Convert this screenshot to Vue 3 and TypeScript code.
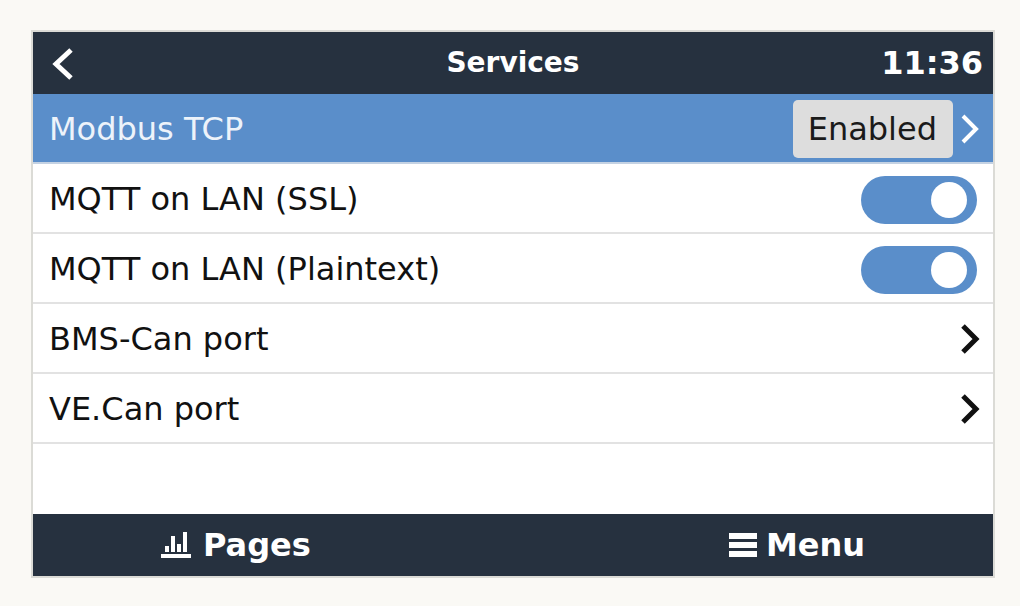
<script setup lang="ts">
import { ref } from 'vue'

interface Setting {
  id: string
  label: string
  kind: 'value' | 'switch' | 'link'
  value?: string
  on?: boolean
}

const selected = ref('modbus')
const settings = ref<Setting[]>([
  { id: 'modbus', label: 'Modbus TCP', kind: 'value', value: 'Enabled' },
  { id: 'mqtt-ssl', label: 'MQTT on LAN (SSL)', kind: 'switch', on: true },
  { id: 'mqtt-plain', label: 'MQTT on LAN (Plaintext)', kind: 'switch', on: true },
  { id: 'bms-can', label: 'BMS-Can port', kind: 'link' },
  { id: 've-can', label: 'VE.Can port', kind: 'link' },
])
</script>

<template>
  <div class="page">
    <main class="device">
      <header class="bar top">
        <button class="back" type="button" aria-label="Back">
          <svg width="24" height="34" viewBox="0 0 24 34" aria-hidden="true">
            <path d="M19 3 4 17l15 14" fill="none" stroke="currentColor" stroke-width="5" />
          </svg>
        </button>
        <h1>Services</h1>
        <time>11:36</time>
      </header>

      <ul class="list">
        <li v-for="s in settings" :key="s.id">
          <label v-if="s.kind === 'switch'" class="row" :class="{ active: selected === s.id }">
            <span class="name">{{ s.label }}</span>
            <input v-model="s.on" class="switch" type="checkbox" role="switch" />
          </label>
          <button
            v-else
            class="row"
            :class="{ active: selected === s.id }"
            type="button"
            @click="selected = s.id"
          >
            <span class="name">{{ s.label }}</span>
            <span v-if="s.value" class="value">{{ s.value }}</span>
            <svg class="chevron" width="20" height="30" viewBox="0 0 20 30" aria-hidden="true">
              <path d="M3 2 16 15 3 28" fill="none" stroke="currentColor" />
            </svg>
          </button>
        </li>
      </ul>

      <footer class="bar bottom">
        <button class="action pages" type="button">
          <svg width="30" height="28" viewBox="0 0 30 28" aria-hidden="true">
            <path
              d="M0 23h30v4H0zM4 15h4v6H4zM10 5h4v16h-4zM16 13h4v8h-4zM22 1h4v20h-4z"
              fill="currentColor"
            />
          </svg>
          <span>Pages</span>
        </button>
        <button class="action menu" type="button">
          <svg width="28" height="28" viewBox="0 0 28 28" aria-hidden="true">
            <path d="M0 2h28v6H0zM0 11h28v6H0zM0 20h28v6H0z" fill="currentColor" />
          </svg>
          <span>Menu</span>
        </button>
      </footer>
    </main>
  </div>
</template>

<style>
body {
  background: #faf9f5;
}
</style>

<style scoped>
.page {
  box-sizing: border-box;
  min-height: 100vh;
  padding: 30px 25px 28px 31px;
  display: flex;
  background: #faf9f5;
  font-family: 'DejaVu Sans', sans-serif;
  font-size: 32px;
  line-height: 40px;
  color: #111;
}

.device {
  flex: 1;
  display: flex;
  flex-direction: column;
  border: 2px solid #dbdbd6;
  background: #fff;
}

button {
  margin: 0;
  padding: 0;
  border: 0;
  background: none;
  color: inherit;
  font: inherit;
  cursor: pointer;
}

svg {
  display: block;
  flex: none;
}

.bar {
  min-height: 62px;
  background: #26313f;
  color: #fff;
  font-weight: bold;
}

.top {
  display: grid;
  grid-template-columns: 1fr auto 1fr;
  align-items: center;
  padding: 0 10px;
}

.back {
  justify-self: start;
  padding: 2px 0 0 9px;
}

h1 {
  margin: 0;
  font-size: 28px;
  line-height: 40px;
}

time {
  justify-self: end;
}

.list {
  flex: 1;
  margin: 0;
  padding: 0;
  list-style: none;
}

.row {
  box-sizing: border-box;
  display: flex;
  align-items: center;
  width: 100%;
  min-height: 70px;
  padding: 2px 13px 0 16px;
  border-bottom: 2px solid #e2e2e2;
  text-align: left;
  cursor: pointer;
}

.name {
  flex: 1;
}

.chevron {
  stroke-width: 5px;
}

.active {
  background: #5a8eca;
  border-bottom-color: #c4d2e3;
  background-clip: padding-box;
  color: #fff;
}

.active .chevron {
  stroke-width: 4px;
}

.active .name {
  color: #edf3fa;
}

.value {
  margin-right: 7px;
  padding: 9px 16px 9px 15px;
  border-radius: 5px;
  background: #ddd;
  color: #1a1a1a;
}

.switch {
  appearance: none;
  box-sizing: border-box;
  flex: none;
  width: 116px;
  height: 48px;
  margin: 2px 3px 0 0;
  padding: 6px 10px;
  display: flex;
  border-radius: 24px;
  background: #b5b5b5;
  cursor: pointer;
}

.switch::before {
  content: '';
  width: 36px;
  height: 36px;
  border-radius: 50%;
  background: #fff;
}

.switch:checked {
  justify-content: flex-end;
  background: #5a8eca;
}

.bottom {
  display: flex;
  justify-content: space-between;
  align-items: center;
  padding: 0 128px;
}

.action {
  display: flex;
  align-items: center;
}

.pages {
  gap: 12px;
}

.menu {
  gap: 9px;
}
</style>
